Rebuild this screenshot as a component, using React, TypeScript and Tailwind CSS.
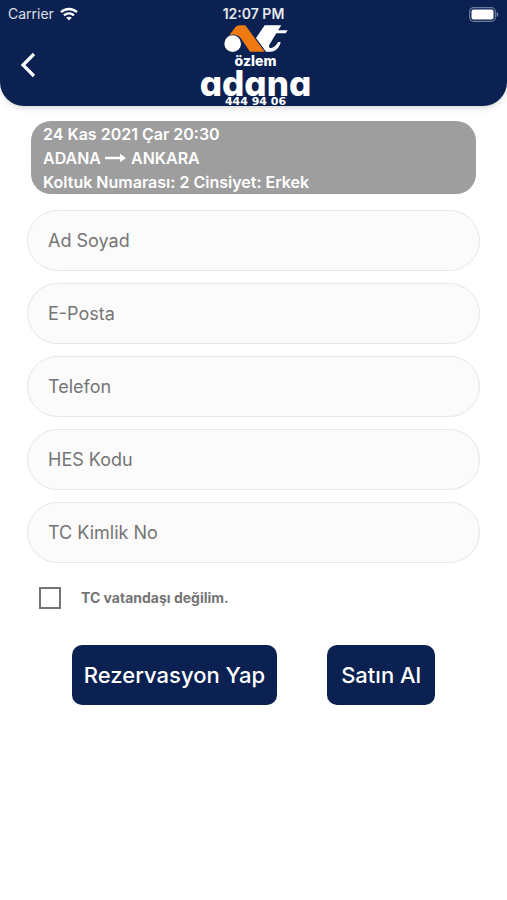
import { useState } from 'react'

const fields = [
  { id: 'name', label: 'Ad Soyad', type: 'text' },
  { id: 'email', label: 'E-Posta', type: 'email' },
  { id: 'phone', label: 'Telefon', type: 'tel' },
  { id: 'hes', label: 'HES Kodu', type: 'text' },
  { id: 'identity', label: 'TC Kimlik No', type: 'text' },
]

function StatusBar() {
  return (
    <div className="grid h-7 grid-cols-3 items-center px-2 text-sm">
      <div className="flex items-center gap-1.5 text-white/85">
        <span>Carrier</span>
        <svg width="18" height="14" viewBox="0 0 18 14" fill="none" stroke="white" strokeWidth="2.5">
          <path d="M1 5.2C5.6 0.9 12.4 0.9 17 5.2" />
          <path d="M4 8.4C6.9 5.7 11.1 5.7 14 8.4" />
          <path d="M9 13.6L6.2 10.8C7.8 9.4 10.2 9.4 11.8 10.8Z" fill="white" stroke="none" />
        </svg>
      </div>
      <span className="text-center font-semibold text-white/90">12:07 PM</span>
      <svg className="justify-self-end" width="30" height="15" viewBox="0 0 30 15" fill="none">
        <rect x="0.7" y="0.7" width="25.6" height="13.6" rx="4" stroke="#6f7c9f" strokeWidth="1.2" />
        <rect x="2.5" y="2.5" width="22" height="10" rx="2" fill="white" />
        <path d="M27.5 5C30 6 30 9 27.5 10Z" fill="#6f7c9f" />
      </svg>
    </div>
  )
}

function Logo() {
  return (
    <div className="flex flex-col items-center text-white">
      <svg width="64" height="28" viewBox="100 74 192 84">
        <path d="M116 108L132 86C137 80 141 78 148 78H164L222 157H178L150 116C142 106 128 102 116 108Z" fill="#ee7a11" />
        <circle cx="126" cy="133" r="25" fill="white" />
        <path d="M222 78H272L262 93H291L285 102H257L236 136C232 146 241 149 249 143C256 138 260 133 262 128H270C266 146 254 157 240 157H226L196 116Z" fill="white" />
      </svg>
      <span className="text-sm leading-[18px] font-extrabold">özlem</span>
      <span className="text-[35px] leading-[26px] font-extrabold [font-feature-settings:'cv11']">adana</span>
      <span className="-mb-0.5 font-['DejaVu_Sans'] text-[11px] leading-3 font-bold">444 94 06</span>
    </div>
  )
}

export default function App() {
  const [foreign, setForeign] = useState(false)

  return (
    <div className="min-h-screen bg-white font-['Inter',sans-serif]">
      <header className="rounded-b-3xl bg-[#0a2152] shadow-md">
        <StatusBar />
        <div className="-mt-1 grid grid-cols-3 items-center pr-4 pl-5">
          <button type="button" aria-label="Geri" className="w-4">
            <svg width="16" height="26" viewBox="0 0 16 26" fill="none" stroke="white" strokeWidth="3.2">
              <path d="M14 2L3 13L14 24" />
            </svg>
          </button>
          <Logo />
        </div>
      </header>

      <main className="px-[27px] pt-[15px]">
        <div className="mx-1 rounded-[20px] bg-[#9e9e9e] px-3 pt-px text-base leading-6 font-semibold text-white">
          <p>24 Kas 2021 Çar 20:30</p>
          <p className="flex items-center gap-1">
            ADANA
            <svg width="22" height="10" viewBox="0 0 22 10">
              <path d="M0 3.8H15V0.8L21 5L15 9.2V6.2H0Z" fill="white" />
            </svg>
            ANKARA
          </p>
          <p>Koltuk Numarası: 2 Cinsiyet: Erkek</p>
        </div>

        <form onSubmit={(e) => e.preventDefault()}>
          <div className="mt-4 flex flex-col gap-3">
            {fields.map((field) => (
              <input
                key={field.id}
                id={field.id}
                type={field.type}
                aria-label={field.label}
                placeholder={field.label}
                className="h-[61px] w-full rounded-full border border-[#e6e6e6] bg-[#fbfbfb] px-5 text-lg text-gray-800 placeholder:text-[#757575]"
              />
            ))}
          </div>

          <label className="mt-6 ml-3 flex items-center gap-5 text-sm font-bold text-[#757575]">
            <input
              type="checkbox"
              checked={foreign}
              onChange={(e) => setForeign(e.target.checked)}
              className="size-[22px] appearance-none border-2 border-[#757575] checked:bg-[#0a2152]"
            />
            TC vatandaşı değilim.
          </label>

          <div className="mt-9 flex justify-center gap-[50px] text-[22px] font-medium text-white">
            <button type="submit" className="h-[60px] rounded-[10px] bg-[#0a2152] px-3">
              Rezervasyon Yap
            </button>
            <button type="button" className="h-[60px] min-w-[108px] rounded-[10px] bg-[#0a2152] px-3">
              Satın Al
            </button>
          </div>
        </form>
      </main>
    </div>
  )
}
